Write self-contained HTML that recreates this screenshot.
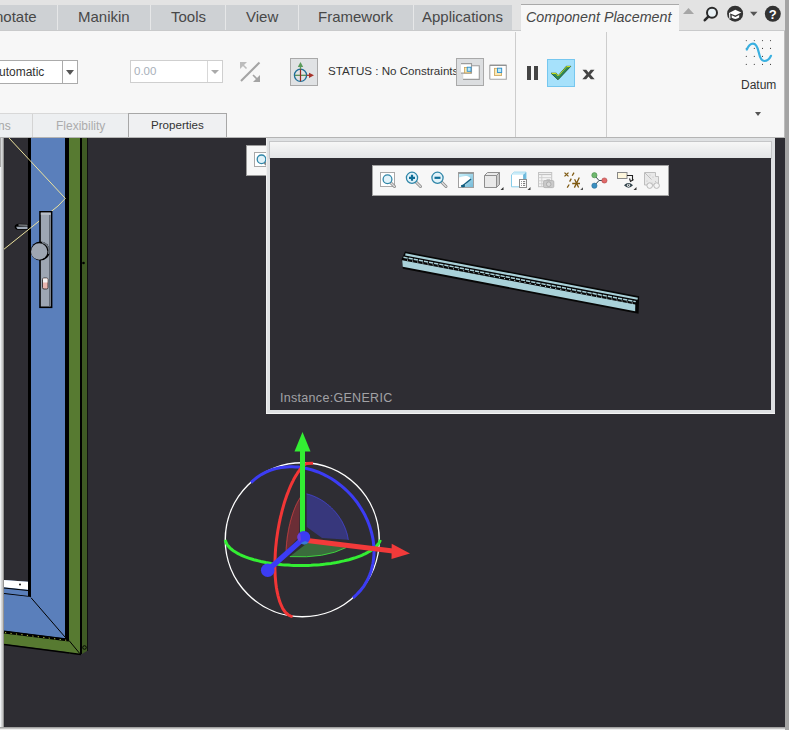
<!DOCTYPE html>
<html><head><meta charset="utf-8">
<style>
*{box-sizing:border-box}
html,body{margin:0;padding:0}
body{width:789px;height:730px;overflow:hidden;position:relative;background:#f7f7f7;font-family:"Liberation Sans",sans-serif;}
.a{position:absolute}
.t{position:absolute;white-space:nowrap;line-height:1}
.tab{position:absolute;top:5px;height:25px;background:#ced1d4}
.sep{position:absolute;top:5px;height:25px;width:1px;background:#e6e7e8}
.tt{position:absolute;top:9px;font-size:15px;color:#484848;white-space:nowrap;line-height:1}
</style></head><body>

<!-- tab bar -->
<div class="a" style="left:0;top:0;width:789px;height:31px;background:#e3e3e3"></div>
<div class="tab" style="left:0;width:512px"></div>
<div class="a" style="left:0;top:30px;width:521px;height:1px;background:#c9cacb"></div>
<div class="a" style="left:679px;top:30px;width:106px;height:1px;background:#c9cacb"></div>
<div class="sep" style="left:57px"></div>
<div class="sep" style="left:150px"></div>
<div class="sep" style="left:225px"></div>
<div class="sep" style="left:298px"></div>
<div class="sep" style="left:413px"></div>
<div class="tt" style="left:-5px">notate</div>
<div class="tt" style="left:78px">Manikin</div>
<div class="tt" style="left:171px">Tools</div>
<div class="tt" style="left:246px">View</div>
<div class="tt" style="left:318px">Framework</div>
<div class="tt" style="left:422px">Applications</div>
<!-- active tab -->
<div class="a" style="left:521px;top:4px;width:158px;height:28px;background:#f7f7f7;border-top:1px solid #a9a9a9"></div>
<div class="tt" style="left:526px;top:10px;font-style:italic;font-size:14.3px;color:#484848">Component Placement</div>

<!-- right tab icons -->
<svg class="a" style="left:680px;top:0" width="105" height="30" viewBox="680 0 105 30">
  <path d="M683,14 L688.5,8 L694,14 Z" fill="#a6a6a6"/>
  <circle cx="712" cy="12.8" r="5" fill="#e9f1f5" stroke="#2a2a2a" stroke-width="2"/>
  <line x1="708.3" y1="16.6" x2="704.8" y2="20.2" stroke="#2a2a2a" stroke-width="2.6" stroke-linecap="round"/>
  <circle cx="735.1" cy="13.7" r="8" fill="#333"/>
  <path d="M729,12.9 L735.3,9.8 L741.3,12.6 L735.3,15.6 Z" fill="#fff"/>
  <path d="M731.7,15.2 L735.3,17 L739.2,15 L739.2,17.6 Q735.3,20.2 731.7,17.8 Z" fill="#fff"/>
  <path d="M729.6,13 L729.9,18.6" stroke="#fff" stroke-width="1.1"/>
  <path d="M750,11.8 H757.5 L753.75,16 Z" fill="#555"/>
  <circle cx="772.8" cy="13.8" r="8" fill="#333"/>
  <text x="772.8" y="18.6" text-anchor="middle" font-family="Liberation Sans" font-weight="bold" font-size="13" fill="#fff">?</text>
</svg>

<!-- right bar -->
<div class="a" style="left:785px;top:0;width:4px;height:730px;background:#a4a4a4"></div>

<!-- ribbon -->
<div class="a" style="left:784px;top:31px;width:1px;height:106px;background:#bdbdbd"></div>
<div class="a" style="left:0;top:137px;width:785px;height:1px;background:#b4b4b4"></div>
<div class="a" style="left:515px;top:32px;width:1px;height:105px;background:#cdcdcd"></div>
<div class="a" style="left:606px;top:32px;width:1px;height:105px;background:#cdcdcd"></div>

<!-- combobox automatic -->
<div class="a" style="left:-2px;top:60px;width:80px;height:24px;background:#fff;border:1px solid #ababab"></div>
<div class="a" style="left:62px;top:61px;width:1px;height:22px;background:#ababab"></div>
<div class="a" style="left:66px;top:70px;width:0;height:0;border-left:4px solid transparent;border-right:4px solid transparent;border-top:5px solid #555"></div>
<div class="t" style="left:-1px;top:66px;font-size:12px;color:#333">utomatic</div>

<!-- disabled combobox -->
<div class="a" style="left:130px;top:60px;width:93px;height:23px;background:#fff;border:1px solid #cfcfcf"></div>
<div class="a" style="left:207px;top:61px;width:1px;height:21px;background:#d8d8d8"></div>
<div class="a" style="left:211px;top:70px;width:0;height:0;border-left:4px solid transparent;border-right:4px solid transparent;border-top:4px solid #aaa"></div>
<div class="t" style="left:134px;top:66px;font-size:11.5px;color:#a8b0ba">0.00</div>

<!-- flip icon -->
<svg class="a" style="left:236px;top:58px" width="28" height="28" viewBox="236 58 28 28">
  <line x1="241" y1="81" x2="259.5" y2="62.5" stroke="#a4a4a4" stroke-width="2"/>
  <path d="M240,62 L247,62 L240,69 Z" fill="#bcbcbc"/>
  <path d="M260,82 L253,82 L260,75 Z" fill="#a4a4a4"/>
  <line x1="242" y1="64" x2="246.5" y2="68.5" stroke="#bcbcbc" stroke-width="1.6"/>
  <line x1="253" y1="75" x2="258" y2="80" stroke="#a4a4a4" stroke-width="1.6"/>
</svg>

<!-- move button -->
<div class="a" style="left:290px;top:58px;width:28px;height:28px;background:#e0e2e4;border:1px solid #a9a9a9"></div>
<svg class="a" style="left:290px;top:58px" width="28" height="28" viewBox="290 58 28 28">
  <circle cx="300.5" cy="75.3" r="6.1" fill="none" stroke="#1f6f98" stroke-width="1.3"/>
  <line x1="295" y1="75.3" x2="306" y2="75.3" stroke="#4f8a4a" stroke-width="1.2"/>
  <line x1="300.5" y1="69" x2="300.5" y2="81.3" stroke="#9b2a22" stroke-width="1.2"/>
  <line x1="300.5" y1="69.2" x2="300.5" y2="66" stroke="#5a9a5a" stroke-width="1.3"/>
  <path d="M297.8,66.9 L300.5,62 L303.2,66.9 Z" fill="#5a9a5a"/>
  <line x1="306.6" y1="75.3" x2="309.5" y2="75.3" stroke="#a5322a" stroke-width="1.3"/>
  <path d="M309,72.8 L314,75.3 L309,78 Z" fill="#a5322a"/>
</svg>
<div class="t" style="left:328px;top:65px;font-size:11.6px;color:#333">STATUS : No Constraints</div>

<!-- window buttons -->
<div class="a" style="left:456px;top:58px;width:28px;height:28px;background:#dcdee0;border:1px solid #a9a9a9"></div>
<svg class="a" style="left:456px;top:58px" width="56" height="28" viewBox="456 58 56 28">
  <rect x="463" y="65.5" width="16.5" height="14" fill="#fff"/>
  <path d="M463,65.7 H479.3 V79.4 H463" fill="none" stroke="#9c9c9c" stroke-width="1.1"/>
  <path d="M462.8,79.4 V66" fill="none" stroke="#d8d8d8" stroke-width="0.8"/>
  <rect x="461" y="63.2" width="10.8" height="10.2" fill="#fff"/>
  <path d="M461,63.6 H471.5 V73.1 H461" fill="none" stroke="#9c9c9c" stroke-width="1.1"/>
  <rect x="464.5" y="67.5" width="6.2" height="5.4" fill="#fde8b2" stroke="#c9a257" stroke-width="0.8"/>
  <rect x="467.2" y="67.2" width="3.8" height="4.1" fill="#bfe9f8" stroke="#2a8fcf" stroke-width="0.9"/>
  <rect x="490" y="65" width="16.5" height="14.5" fill="#fff"/>
  <path d="M489.8,79.2 V65.3 H506.3 V79.2 H489.8" fill="none" stroke="#a4a4a4" stroke-width="1.1"/>
  <line x1="490" y1="65.3" x2="506.3" y2="65.3" stroke="#8e8e8e" stroke-width="1.2"/>
  <rect x="494.4" y="68.3" width="7.2" height="7.2" fill="#fde8b2" stroke="#c9a257" stroke-width="0.8"/>
  <rect x="497.5" y="68.2" width="4.2" height="4.3" fill="#bfe9f8" stroke="#2a8fcf" stroke-width="0.9"/>
</svg>

<!-- pause / ok / cancel -->
<div class="a" style="left:527px;top:66px;width:4px;height:14px;background:#444"></div>
<div class="a" style="left:534px;top:66px;width:4px;height:14px;background:#444"></div>
<div class="a" style="left:547px;top:59px;width:28px;height:28px;background:#a6e1fb;border:1px solid #76c7ef"></div>
<svg class="a" style="left:547px;top:59px" width="28" height="28" viewBox="547 59 28 28">
  <path d="M551,73.2 L556.2,73.2 L558.2,75.8 L566.3,66.3 L570.8,66.3 L558,79.8 Z" fill="#2f8a55" stroke="#1d4a2a" stroke-width="0.8" stroke-linejoin="round"/>
  <path d="M551.6,73.4 L556,73.4 L558.2,76 M566.5,66.6 L570.3,66.6" stroke="#d8e81a" stroke-width="1" fill="none"/>
  <path d="M558.4,76 L566.5,66.8" stroke="#c8dc20" stroke-width="0.9" fill="none"/>
</svg>
<svg class="a" style="left:580px;top:66px" width="17" height="16" viewBox="580 66 17 16">
  <path d="M582.5,69.8 L586.3,69.8 L588.5,72.6 L590.7,69.8 L594.5,69.8 L590.5,74.5 L594.7,79.3 L590.8,79.3 L588.5,76.4 L586.2,79.3 L582.3,79.3 L586.5,74.5 Z" fill="#444"/>
</svg>

<!-- datum -->
<svg class="a" style="left:740px;top:36px" width="40" height="34" viewBox="740 36 40 34">
  <g fill="#444">
    <circle cx="746.3" cy="40.6" r="0.55"/><circle cx="754.3" cy="40.6" r="0.55"/><circle cx="762.5" cy="40.6" r="0.55"/><circle cx="770.5" cy="40.6" r="0.55"/>
    <circle cx="746.3" cy="48.4" r="0.55"/><circle cx="754.3" cy="48.4" r="0.55"/><circle cx="762.5" cy="48.4" r="0.55"/><circle cx="770.5" cy="48.4" r="0.55"/>
    <circle cx="746.3" cy="56.4" r="0.55"/><circle cx="754.3" cy="56.4" r="0.55"/><circle cx="762.5" cy="56.4" r="0.55"/><circle cx="770.5" cy="56.4" r="0.55"/>
    <circle cx="746.3" cy="64.4" r="0.55"/><circle cx="754.3" cy="64.4" r="0.55"/><circle cx="762.5" cy="64.4" r="0.55"/><circle cx="770.5" cy="64.4" r="0.55"/>
  </g>
  <path d="M746.8,49.6 C748.5,45.5 750.8,43.6 753,43.6 C756,43.6 757.6,47 758.8,52.5 C760,58 761.6,61 764.5,61 C767.5,61 769.5,59 771,55.8" fill="none" stroke="#3ab0e0" stroke-width="2.2" stroke-linecap="round"/>
</svg>
<div class="t" style="left:741px;top:79px;font-size:12px;color:#333">Datum</div>
<div class="a" style="left:755px;top:112px;width:0;height:0;border-left:3.5px solid transparent;border-right:3.5px solid transparent;border-top:4px solid #555"></div>

<!-- sub tabs -->
<div class="a" style="left:0;top:113px;width:128px;height:24px;background:#edeff1;border-top:1px solid #d8d8d8"></div>
<div class="a" style="left:32px;top:114px;width:1px;height:23px;background:#d4d4d4"></div>
<div class="t" style="left:-2px;top:120px;font-size:12px;color:#a6a6a6">ns</div>
<div class="t" style="left:56px;top:120px;font-size:12px;color:#acacac">Flexibility</div>
<div class="a" style="left:128px;top:113px;width:99px;height:24px;background:#eff0f2;border:1px solid #a7a7a7;border-bottom:none"></div>
<div class="t" style="left:151px;top:119px;font-size:11.6px;color:#333">Properties</div>

<!-- viewport -->
<div class="a" id="vp" style="left:0;top:138px;width:785px;height:589px;background:#2e2d33"></div>
<div class="a" style="left:0;top:138px;width:1px;height:589px;background:#f0f2f4"></div>
<div class="a" style="left:0;top:138px;width:1px;height:29px;background:#a8a8a8"></div>
<div class="a" style="left:1px;top:138px;width:1px;height:589px;background:#d5d7d9"></div>
<div class="a" style="left:2px;top:138px;width:1px;height:589px;background:#c6c6c6"></div>
<div class="a" style="left:3px;top:138px;width:1px;height:589px;background:#959595"></div>
<div class="a" style="left:4px;top:138px;width:1px;height:589px;background:#29292f"></div>
<div class="a" style="left:0;top:727px;width:785px;height:1px;background:#a2a2a2"></div>
<div class="a" style="left:0;top:728px;width:785px;height:1px;background:#c4c4c4"></div>
<div class="a" style="left:0;top:729px;width:785px;height:1px;background:#efefef"></div>

<svg class="a" style="left:0;top:138px" width="785" height="589" viewBox="0 138 785 589">
  <!-- door -->
  <g id="door">
    <rect x="28" y="138" width="3" height="460" fill="#000"/>
    <rect x="31" y="138" width="34" height="500" fill="#5a7fbb"/>
    <rect x="65" y="138" width="4" height="503" fill="#000"/>
    <rect x="69" y="138" width="11" height="516" fill="#577a31"/>
    <rect x="80" y="138" width="2" height="516" fill="#000"/>
    <polygon points="82,138 87,138 87,651 82,654" fill="#3f5a24"/>
    <line x1="87.5" y1="138" x2="87.5" y2="651" stroke="#111" stroke-width="1"/>
    <circle cx="84.5" cy="647.5" r="1.8" fill="none" stroke="#000" stroke-width="0.9"/>
    <circle cx="83.5" cy="263" r="1.3" fill="#000"/>
    <!-- bottom part -->
    <polygon points="4,580 28,581.7 28,597.7 4,594" fill="#5a7fbb"/>
    <polygon points="4,580 28,581.7 28,589.7 4,587.2" fill="#fff"/>
    <line x1="4" y1="588" x2="28" y2="590.5" stroke="#000" stroke-width="1.2"/>
    <line x1="4" y1="593.8" x2="31" y2="597" stroke="#000" stroke-width="1.6"/>
    <circle cx="20" cy="584.5" r="0.9" fill="#000"/>
    <polygon points="4,594 31,597 65,636.5 65,638.4 4,631" fill="#5a7fbb"/>
    <line x1="31" y1="597.7" x2="65" y2="637" stroke="#000" stroke-width="1"/>
    <polygon points="4,631 69,640 80,653.8 4,644" fill="#577a31"/>
    <line x1="4" y1="632.3" x2="69" y2="640.3" stroke="#000" stroke-width="2.6"/>
    <line x1="5" y1="632.6" x2="68" y2="640.4" stroke="#b8c848" stroke-width="1" stroke-dasharray="1.2,4.3"/>
    <line x1="4" y1="631" x2="69" y2="639.2" stroke="#000" stroke-width="1"/>
    <line x1="4" y1="644.5" x2="81" y2="654.5" stroke="#000" stroke-width="1.6"/>
    <line x1="69" y1="640.5" x2="80" y2="653.8" stroke="#000" stroke-width="1"/>
    <!-- yellow lines -->
    <polyline points="9,138 65.3,198.4 58,206 4,249.2" fill="none" stroke="#ece29e" stroke-width="1"/>
    <!-- handle -->
    <rect x="40" y="211.8" width="11.6" height="95.5" fill="#9da6b3" stroke="#000" stroke-width="1.6"/>
    <rect x="40.8" y="212.6" width="10" height="2.2" fill="#b8bfc8"/>
    <line x1="49.6" y1="215" x2="49.6" y2="306.5" stroke="#5c6470" stroke-width="1"/>
    <circle cx="40.3" cy="251" r="9.6" fill="#000"/>
    <path d="M42,242.2 A9,9 0 0 1 48.6,254" fill="none" stroke="#6e7681" stroke-width="1.4"/>
    <circle cx="39.2" cy="251.5" r="8.2" fill="#9ea6b2"/>
    <rect x="42.5" y="278" width="5.5" height="11" rx="1.5" fill="#e9b6b0" stroke="#222" stroke-width="0.8"/>
    <rect x="43" y="278.5" width="4.5" height="4" fill="#f4f4f4"/>
    <path d="M14.6,226.6 Q15.5,223.6 19,223.8 L27.8,224 L27.8,229.8 L18,229.8 Q14.6,229.6 14.6,226.6 Z" fill="#000"/>
    <path d="M16,226.8 L27.5,226.4 L27.5,229 L17.5,229 Z" fill="#9fa9b6"/>
    <path d="M18.5,225 L27.5,225.2" stroke="#c6ccd4" stroke-width="0.9"/>
  </g>

  <!-- hidden toolbar behind preview -->
  <rect x="246.5" y="145.5" width="22" height="30" fill="#f7f7f7" stroke="#9c9c9c"/>
  <rect x="254.5" y="152.5" width="14" height="14" fill="#fff" stroke="#a8a8a8"/>
  <line x1="264.5" y1="162.5" x2="267" y2="165" stroke="#8a8a8a" stroke-width="2.6"/>
  <circle cx="261.5" cy="159.3" r="4.3" fill="#dff1f8" stroke="#2f86a8" stroke-width="1.3"/>

  <!-- preview window -->
  <rect x="266" y="138" width="509" height="276" fill="#dfe1e3"/>
  <rect x="266" y="138" width="1" height="276" fill="#f0f0f0"/>
  <rect x="266" y="413" width="509" height="1" fill="#f5f5f5"/>
  <defs>
    <linearGradient id="tb" x1="0" y1="0" x2="0" y2="1">
      <stop offset="0" stop-color="#f7f7f7"/><stop offset="1" stop-color="#e2e4e6"/>
    </linearGradient>
  </defs>
  <rect x="269.5" y="141.5" width="502" height="17" fill="url(#tb)" stroke="#c5c6c8"/>
  <rect x="270" y="158" width="501" height="252" fill="#2e2d33"/>

  <!-- preview toolbar -->
  <rect x="372.5" y="165.5" width="296" height="30" fill="#f7f7f7" stroke="#a3a3a3"/>

  <!-- preview toolbar icons -->
  <g id="ptb">
    <!-- 1 zoom fit -->
    <rect x="380.5" y="172.5" width="14" height="14" fill="#fff" stroke="#a8a8a8"/>
    <line x1="390.5" y1="182.5" x2="394.5" y2="186.5" stroke="#8a8a8a" stroke-width="3" stroke-linecap="round"/>
    <line x1="390.5" y1="182.5" x2="394.5" y2="186.5" stroke="#dcdcdc" stroke-width="1.4" stroke-linecap="round"/>
    <circle cx="387.5" cy="179.3" r="4.4" fill="#e2f3fa" stroke="#2f86a8" stroke-width="1.3"/>
    <!-- 2 zoom in -->
    <line x1="416" y1="182" x2="420.5" y2="186.5" stroke="#8a8a8a" stroke-width="3" stroke-linecap="round"/>
    <line x1="416" y1="182" x2="420.5" y2="186.5" stroke="#dcdcdc" stroke-width="1.4" stroke-linecap="round"/>
    <circle cx="412" cy="177.8" r="5.6" fill="#e2f3fa" stroke="#2f86a8" stroke-width="1.3"/>
    <path d="M409,177.8 H415 M412,174.8 V180.8" stroke="#0f6d96" stroke-width="2.2"/>
    <!-- 3 zoom out -->
    <line x1="441.5" y1="182" x2="446" y2="186.5" stroke="#8a8a8a" stroke-width="3" stroke-linecap="round"/>
    <line x1="441.5" y1="182" x2="446" y2="186.5" stroke="#dcdcdc" stroke-width="1.4" stroke-linecap="round"/>
    <circle cx="437.5" cy="177.8" r="5.6" fill="#e2f3fa" stroke="#2f86a8" stroke-width="1.3"/>
    <path d="M434.5,177.8 H440.5" stroke="#0f6d96" stroke-width="2.2"/>
    <!-- 4 repaint -->
    <defs>
      <linearGradient id="rp" x1="0" y1="0" x2="1" y2="1">
        <stop offset="0" stop-color="#cdf3fd"/><stop offset="1" stop-color="#72b8d6"/>
      </linearGradient>
    </defs>
    <rect x="458.5" y="172.5" width="15" height="15" fill="url(#rp)" stroke="#a0a0a0"/>
    <line x1="458.5" y1="173.2" x2="473.5" y2="173.2" stroke="#8c8c8c" stroke-width="1.2"/>
    <path d="M459,187 L459,177.5 Q463,175.5 467,176 Q470,176.5 470.5,178.5 L464,187 Z" fill="#fff"/>
    <line x1="463" y1="185.5" x2="471" y2="179" stroke="#115e80" stroke-width="1.5"/>
    <ellipse cx="463" cy="186" rx="2.2" ry="1.3" fill="#115e80"/>
    <!-- 5 cube -->
    <path d="M484.5,175.5 L487.5,172.5 L499.5,172.5 L499.5,184.5 L496.5,187.5 L484.5,187.5 Z" fill="#e9e9e9" stroke="#8e8e8e"/>
    <path d="M496.5,175.5 L499.5,172.5 L499.5,184.5 L496.5,187.5 Z" fill="#c9c9c9" stroke="#8e8e8e"/>
    <path d="M484.5,175.5 H496.5 V187.5" fill="none" stroke="#8e8e8e"/>
    <path d="M500.5,190 L503.5,187 L503.5,190 Z" fill="#333"/>
    <!-- 6 saved views -->
    <path d="M511.5,174.8 L514.3,172.2 L526,172.2 L526,184 L523.1,186.8 L511.5,186.8 Z" fill="#fff" stroke="#86cdea" stroke-width="1"/>
    <path d="M511.8,174.8 L514.3,172.5 L525.7,172.5 L523.1,174.8 Z" fill="#c9ebf8"/>
    <path d="M523.1,174.8 L525.9,172.4 L525.9,184 L523.1,186.6 Z" fill="#6ab8dc"/>
    <rect x="519.5" y="179.5" width="7" height="8" fill="#fff" stroke="#8a8a8a"/>
    <path d="M521.2,181.6 H522 M523,181.6 H525.2 M521.2,183.5 H522 M523,183.5 H525.2 M521.2,185.4 H522 M523,185.4 H525.2" stroke="#6a6a6a" stroke-width="0.9"/>
    <path d="M527.5,190 L530.5,187 L530.5,190 Z" fill="#444"/>
    <!-- 7 table+camera (disabled) -->
    <rect x="538.5" y="172.5" width="13.2" height="14.2" fill="#f4f4f4" stroke="#c4c4c4"/>
    <path d="M538.5,174.5 H551.7" stroke="#c4c4c4" stroke-width="1.2"/>
    <path d="M538.5,177.7 H551.7 M538.5,180.8 H551.7 M538.5,183.8 H551.7 M541.8,174.5 V186.7" stroke="#cdcdcd" stroke-width="0.9"/>
    <rect x="543.6" y="180.6" width="10.2" height="7" rx="1.2" fill="#cacaca" stroke="#b2b2b2" stroke-width="0.9"/>
    <rect x="546.5" y="179.3" width="3.6" height="1.8" fill="#b6b6b6"/>
    <circle cx="548.7" cy="184.2" r="2.3" fill="#d8d8d8" stroke="#a9a9a9" stroke-width="0.9"/>
    <!-- 8 datum display -->
    <g stroke="#7f5a12" stroke-width="1.3" fill="none">
      <path d="M564.5,172.6 L568.5,176.4 M568.5,172.6 L564.5,176.4"/>
      <path d="M574,172.6 L572.2,175.8 M571.3,178.6 L569.6,181.6 M569.2,184.5 L567.2,187.6"/>
      <path d="M579.3,177.5 L574.4,187.6 M574.6,179.3 L578.6,187.5 M572.2,183.5 H580"/>
    </g>
    <path d="M580.2,190 L583,187.2 L583,190 Z" fill="#555"/>
    <!-- 9 spin nodes -->
    <path d="M594.4,175.2 L599,180.5 L604.4,180.5 M599,180.5 L594.4,185.7" stroke="#3a4a55" stroke-width="1" fill="none"/>
    <circle cx="594.4" cy="175.2" r="2.6" fill="#6fb86f" stroke="#4a8f4a" stroke-width="0.6"/>
    <circle cx="604.4" cy="180.5" r="2.6" fill="#e06a6a" stroke="#b04848" stroke-width="0.6"/>
    <circle cx="594.4" cy="185.7" r="2.6" fill="#3a8fc0" stroke="#2a6f98" stroke-width="0.6"/>
    <!-- 10 annotation display -->
    <rect x="617.5" y="172.5" width="9.5" height="6" fill="#fdf6dc" stroke="#888"/>
    <path d="M627,175.5 H632.5 V180.5" stroke="#222" stroke-width="1.1" fill="none"/>
    <path d="M629.5,178.5 L630.5,181.5 L633.5,179.5" stroke="#222" stroke-width="1.1" fill="none"/>
    <path d="M624,185.3 Q628.5,180.5 633,185.3 Q628.5,190 624,185.3 Z" fill="#2f4048"/>
    <circle cx="628.5" cy="185.3" r="1.6" fill="#e8e8e8"/>
    <circle cx="628.5" cy="185.3" r="0.7" fill="#2f4048"/>
    <path d="M633.5,190 L636.5,187 L636.5,190 Z" fill="#333"/>
    <!-- 11 disabled -->
    <path d="M644.5,172.5 H655.5 V176.5 H658.5 V185 H644.5 Z" fill="#e8e8e8" stroke="#bdbdbd"/>
    <line x1="645" y1="173" x2="651.5" y2="179.5" stroke="#bdbdbd"/>
    <g fill="#b8b8b8"><circle cx="650" cy="175" r="0.5"/><circle cx="653" cy="177" r="0.5"/><circle cx="647" cy="181" r="0.5"/><circle cx="655.5" cy="181.5" r="0.5"/><circle cx="652" cy="183" r="0.5"/></g>
    <circle cx="649.7" cy="185.6" r="2.8" fill="#f4f4f4" stroke="#b8b8b8" stroke-width="1"/>
    <circle cx="656.6" cy="185.6" r="2.8" fill="#f4f4f4" stroke="#b8b8b8" stroke-width="1"/>
  </g>

  <!-- beam -->
  <g transform="translate(405,252) rotate(10.8)">
    <polygon points="0,-0.4 238.3,-0.4 241,16.9 1,16.9 -2,7.4" fill="#060606"/>
    <rect x="0.8" y="1.2" width="236.5" height="2.2" fill="#a9d1d9"/>
    <line x1="-0.5" y1="5.5" x2="236" y2="5.5" stroke="#a9d1d9" stroke-width="1.5" stroke-dasharray="4.3,0.9"/>
    <line x1="3.5" y1="7.5" x2="236" y2="7.5" stroke="#d5eaee" stroke-width="0.9" stroke-dasharray="1,4.2"/>
    <polygon points="-1.2,8.6 236,8.4 237.2,15 0.5,15" fill="#a9d1d9"/>
  </g>

  <text x="280" y="402" font-family="Liberation Sans" font-size="12.5" letter-spacing="0.3" fill="#a2a2a6">Instance:GENERIC</text>

  <!-- dragger -->
  <g id="dragger">
    <path d="M306.6,493.9 L307.4,494.1 L308.2,494.3 L308.9,494.5 L309.7,494.7 L310.5,495.0 L311.2,495.2 L312.0,495.5 L312.7,495.8 L313.5,496.1 L314.2,496.4 L315.0,496.7 L315.7,497.1 L316.5,497.4 L317.2,497.8 L318.0,498.1 L318.7,498.5 L319.4,498.9 L320.1,499.3 L320.9,499.7 L321.6,500.2 L322.3,500.6 L323.0,501.1 L323.7,501.5 L324.4,502.0 L325.1,502.5 L325.7,503.0 L326.4,503.5 L327.1,504.0 L327.7,504.6 L328.4,505.1 L329.0,505.6 L329.7,506.2 L330.3,506.8 L330.9,507.3 L331.5,507.9 L332.1,508.5 L332.7,509.1 L333.3,509.7 L333.9,510.4 L334.5,511.0 L335.0,511.6 L335.6,512.3 L336.1,512.9 L336.7,513.6 L337.2,514.3 L337.7,514.9 L338.2,515.6 L338.7,516.3 L339.2,517.0 L339.6,517.7 L340.1,518.4 L340.6,519.1 L341.0,519.8 L341.4,520.6 L341.9,521.3 L342.3,522.0 L342.7,522.8 L343.0,523.5 L343.4,524.3 L343.8,525.0 L344.1,525.8 L344.5,526.5 L344.8,527.3 L345.1,528.1 L345.4,528.9 L345.7,529.6 L346.0,530.4 L346.2,531.2 L346.5,532.0 L346.7,532.7 L347.0,533.5 L347.2,534.3 L347.4,535.1 L347.6,535.9 L347.7,536.7 L347.9,537.5 L348.0,538.3 L348.2,539.0 L348.3,539.8 L322,538 L306.8,527 Z" fill="#37377c"/>
    <path d="M306.6,493.9 L307.4,494.1 L308.2,494.3 L308.9,494.5 L309.7,494.7 L310.5,495.0 L311.2,495.2 L312.0,495.5 L312.7,495.8 L313.5,496.1 L314.2,496.4 L315.0,496.7 L315.7,497.1 L316.5,497.4 L317.2,497.8 L318.0,498.1 L318.7,498.5 L319.4,498.9 L320.1,499.3 L320.9,499.7 L321.6,500.2 L322.3,500.6 L323.0,501.1 L323.7,501.5 L324.4,502.0 L325.1,502.5 L325.7,503.0 L326.4,503.5 L327.1,504.0 L327.7,504.6 L328.4,505.1 L329.0,505.6 L329.7,506.2 L330.3,506.8 L330.9,507.3 L331.5,507.9 L332.1,508.5 L332.7,509.1 L333.3,509.7 L333.9,510.4 L334.5,511.0 L335.0,511.6 L335.6,512.3 L336.1,512.9 L336.7,513.6 L337.2,514.3 L337.7,514.9 L338.2,515.6 L338.7,516.3 L339.2,517.0 L339.6,517.7 L340.1,518.4 L340.6,519.1 L341.0,519.8 L341.4,520.6 L341.9,521.3 L342.3,522.0 L342.7,522.8 L343.0,523.5 L343.4,524.3 L343.8,525.0 L344.1,525.8 L344.5,526.5 L344.8,527.3 L345.1,528.1 L345.4,528.9 L345.7,529.6 L346.0,530.4 L346.2,531.2 L346.5,532.0 L346.7,532.7 L347.0,533.5 L347.2,534.3 L347.4,535.1 L347.6,535.9 L347.7,536.7 L347.9,537.5 L348.0,538.3 L348.2,539.0 L348.3,539.8" fill="none" stroke="#4646e0" stroke-width="0.8"/>
    <path d="M301.7,495.6 L301.4,496.0 L301.1,496.4 L300.8,496.8 L300.5,497.2 L300.2,497.7 L299.9,498.1 L299.6,498.6 L299.3,499.1 L299.0,499.6 L298.7,500.1 L298.4,500.6 L298.1,501.1 L297.8,501.6 L297.5,502.2 L297.2,502.7 L297.0,503.3 L296.7,503.9 L296.4,504.4 L296.1,505.0 L295.8,505.6 L295.6,506.2 L295.3,506.9 L295.0,507.5 L294.8,508.1 L294.5,508.8 L294.3,509.4 L294.0,510.1 L293.7,510.8 L293.5,511.5 L293.2,512.1 L293.0,512.8 L292.8,513.5 L292.5,514.3 L292.3,515.0 L292.1,515.7 L291.8,516.4 L291.6,517.2 L291.4,517.9 L291.2,518.7 L291.0,519.4 L290.7,520.2 L290.5,520.9 L290.3,521.7 L290.1,522.5 L290.0,523.3 L289.8,524.0 L289.6,524.8 L289.4,525.6 L289.2,526.4 L289.0,527.2 L288.9,528.0 L288.7,528.8 L288.6,529.6 L288.4,530.4 L288.3,531.3 L288.1,532.1 L288.0,532.9 L287.8,533.7 L287.7,534.5 L287.6,535.3 L287.4,536.2 L287.3,537.0 L287.2,537.8 L287.1,538.6 L287.0,539.5 L286.9,540.3 L286.8,541.1 L286.7,541.9 L286.6,542.7 L286.6,543.6 L286.5,544.4 L286.4,545.2 L286.4,546.0 L286.3,546.8 L286.2,547.6 L286.2,548.4 L286.2,549.2 L286.1,550.0 L286.1,550.8 L299,537 L300,494 Z" fill="#6b2e36"/>
    <path d="M301.7,495.6 L301.4,496.0 L301.1,496.4 L300.8,496.8 L300.5,497.2 L300.2,497.7 L299.9,498.1 L299.6,498.6 L299.3,499.1 L299.0,499.6 L298.7,500.1 L298.4,500.6 L298.1,501.1 L297.8,501.6 L297.5,502.2 L297.2,502.7 L297.0,503.3 L296.7,503.9 L296.4,504.4 L296.1,505.0 L295.8,505.6 L295.6,506.2 L295.3,506.9 L295.0,507.5 L294.8,508.1 L294.5,508.8 L294.3,509.4 L294.0,510.1 L293.7,510.8 L293.5,511.5 L293.2,512.1 L293.0,512.8 L292.8,513.5 L292.5,514.3 L292.3,515.0 L292.1,515.7 L291.8,516.4 L291.6,517.2 L291.4,517.9 L291.2,518.7 L291.0,519.4 L290.7,520.2 L290.5,520.9 L290.3,521.7 L290.1,522.5 L290.0,523.3 L289.8,524.0 L289.6,524.8 L289.4,525.6 L289.2,526.4 L289.0,527.2 L288.9,528.0 L288.7,528.8 L288.6,529.6 L288.4,530.4 L288.3,531.3 L288.1,532.1 L288.0,532.9 L287.8,533.7 L287.7,534.5 L287.6,535.3 L287.4,536.2 L287.3,537.0 L287.2,537.8 L287.1,538.6 L287.0,539.5 L286.9,540.3 L286.8,541.1 L286.7,541.9 L286.6,542.7 L286.6,543.6 L286.5,544.4 L286.4,545.2 L286.4,546.0 L286.3,546.8 L286.2,547.6 L286.2,548.4 L286.2,549.2 L286.1,550.0 L286.1,550.8" fill="none" stroke="#e04444" stroke-width="0.8"/>
    <path d="M289.8,556.6 Q325,558.5 346.2,547.5 L310,541 Z" fill="#3a6c3c"/>
    <path d="M289.8,556.6 Q325,558.5 346.2,547.5" fill="none" stroke="#3ee03e" stroke-width="0.9"/>
    <circle cx="302.25" cy="539.8" r="77" fill="none" stroke="#ffffff" stroke-width="1.4"/>
    <path d="M225.3,539.9 L225.5,540.9 L225.8,542.0 L226.3,543.0 L226.8,544.1 L227.5,545.1 L228.3,546.1 L229.2,547.1 L230.2,548.1 L231.2,549.0 L232.4,550.0 L233.7,550.9 L235.1,551.8 L236.6,552.7 L238.1,553.6 L239.8,554.5 L241.6,555.3 L243.4,556.1 L245.3,556.9 L247.3,557.6 L249.4,558.3 L251.6,559.0 L253.8,559.7 L256.1,560.3 L258.5,560.9 L260.9,561.5 L263.4,562.0 L265.9,562.5 L268.5,562.9 L271.2,563.4 L273.9,563.8 L276.6,564.1 L279.4,564.4 L282.2,564.7 L285.0,564.9 L287.9,565.1 L290.7,565.3 L293.6,565.4 L296.5,565.5 L299.5,565.5 L302.4,565.5 L305.3,565.5 L308.2,565.4 L311.1,565.3 L314.0,565.1 L316.9,564.9 L319.8,564.7 L322.6,564.4 L325.4,564.1 L328.2,563.7 L331.0,563.4 L333.7,562.9 L336.4,562.5 L339.0,562.0 L341.5,561.4 L344.0,560.9 L346.5,560.3 L348.9,559.7 L351.2,559.0 L353.5,558.3 L355.7,557.6 L357.8,556.8 L359.8,556.1 L361.8,555.3 L363.7,554.4 L365.5,553.6 L367.2,552.7 L368.8,551.8 L370.3,550.9 L371.7,550.0 L373.0,549.0 L374.3,548.0 L375.4,547.1 L376.4,546.1 L377.4,545.0 L378.2,544.0 L378.9,543.0 L379.5,542.0 L380.0,540.9 L380.4,539.9" fill="none" stroke="#33ee33" stroke-width="3"/>
    <path d="M251.0,482.6 L252.9,480.8 L254.9,479.1 L256.9,477.5 L259.1,476.0 L261.3,474.6 L263.6,473.4 L266.0,472.2 L268.4,471.1 L270.9,470.2 L273.4,469.3 L276.0,468.6 L278.6,468.0 L281.3,467.5 L284.0,467.2 L286.8,466.9 L289.6,466.8 L292.4,466.8 L295.2,466.9 L298.1,467.1 L300.9,467.5 L303.8,467.9 L306.6,468.5 L309.5,469.2 L312.3,470.0 L315.1,471.0 L318.0,472.0 L320.7,473.2 L323.5,474.4 L326.2,475.8 L328.9,477.3 L331.6,478.8 L334.2,480.5 L336.7,482.3 L339.2,484.2 L341.7,486.1 L344.0,488.2 L346.4,490.3 L348.6,492.5 L350.8,494.8 L352.8,497.1 L354.9,499.6 L356.8,502.0 L358.6,504.6 L360.3,507.2 L362.0,509.9 L363.5,512.6 L365.0,515.3 L366.3,518.1 L367.6,520.9 L368.7,523.8 L369.8,526.7 L370.7,529.6 L371.5,532.5 L372.2,535.4 L372.8,538.3 L373.3,541.2 L373.6,544.1 L373.8,547.1 L374.0,549.9 L374.0,552.8 L373.9,555.7 L373.6,558.5 L373.3,561.3 L372.8,564.0 L372.2,566.7 L371.6,569.4 L370.8,572.0 L369.8,574.6 L368.8,577.0 L367.7,579.5 L366.4,581.8 L365.1,584.1 L363.7,586.3 L362.1,588.4 L360.5,590.5 L358.7,592.4 L356.9,594.3 L355.0,596.1 L353.0,597.8" fill="none" stroke="#3c3cf4" stroke-width="3"/>
    <path d="M313,463.3 L306.5,463.6 L305.2,464.1 L304.2,465.0 L303.2,466.0 L302.1,467.0 L301.1,468.2 L300.1,469.5 L299.1,470.8 L298.1,472.2 L297.1,473.8 L296.1,475.3 L295.1,477.0 L294.1,478.7 L293.2,480.6 L292.2,482.5 L291.3,484.4 L290.4,486.4 L289.5,488.5 L288.6,490.7 L287.8,492.9 L286.9,495.1 L286.1,497.5 L285.3,499.8 L284.5,502.2 L283.8,504.7 L283.1,507.2 L282.4,509.7 L281.7,512.3 L281.1,514.9 L280.4,517.6 L279.9,520.2 L279.3,522.9 L278.8,525.6 L278.3,528.3 L277.8,531.1 L277.4,533.8 L277.0,536.5 L276.6,539.3 L276.3,542.0 L276.0,544.8 L275.7,547.5 L275.5,550.2 L275.3,553.0 L275.2,555.6 L275.1,558.3 L275.0,561.0 L274.9,563.6 L274.9,566.2 L274.9,568.7 L275.0,571.2 L275.1,573.7 L275.2,576.1 L275.4,578.5 L275.6,580.9 L275.8,583.1 L276.1,585.4 L276.4,587.5 L276.8,589.7 L277.1,591.7 L277.6,593.7 L278.0,595.6 L278.5,597.4 L279.0,599.2 L279.5,600.9 L280.1,602.5 L280.7,604.0 L281.3,605.5 L282.0,606.9 L282.6,608.2 L283.3,609.4 L284.1,610.5 L284.8,611.5 L285.6,612.4 L286.4,613.3 L287.3,614.0 L288.1,614.7 L289.0,615.3 L289.9,615.7 L290.8,616.1 L291.7,616.4 L292.6,616.6" fill="none" stroke="#f23636" stroke-width="3"/>
    <line x1="302.5" y1="534" x2="302.5" y2="450" stroke="#33ee33" stroke-width="5"/>
    <path d="M294.5,451.5 L302.5,432 L310.5,451.5 Z" fill="#33ee33"/>
    <line x1="305" y1="540.2" x2="393" y2="551" stroke="#f23a3a" stroke-width="5"/>
    <path d="M391.7,543.8 L410,553.4 L391.5,559 Z" fill="#f23a3a"/>
    <line x1="304" y1="538" x2="268" y2="570" stroke="#3c3cf4" stroke-width="5.5"/>
    <circle cx="267.7" cy="570.2" r="6.8" fill="#3c3cf4"/>
    <circle cx="303.8" cy="537.4" r="6.4" fill="#3c3cf2"/>
    <path d="M298.5,533.5 A6.4,6.4 0 0 0 299.5,542 L301,540 L300.5,534 Z" fill="#7440d8" opacity="0.85"/>
    <path d="M300.5,543.2 A6.4,6.4 0 0 0 308.8,542.5 L305,541 Z" fill="#3a80d0" opacity="0.9"/>
  </g>
</svg>
</body></html>
